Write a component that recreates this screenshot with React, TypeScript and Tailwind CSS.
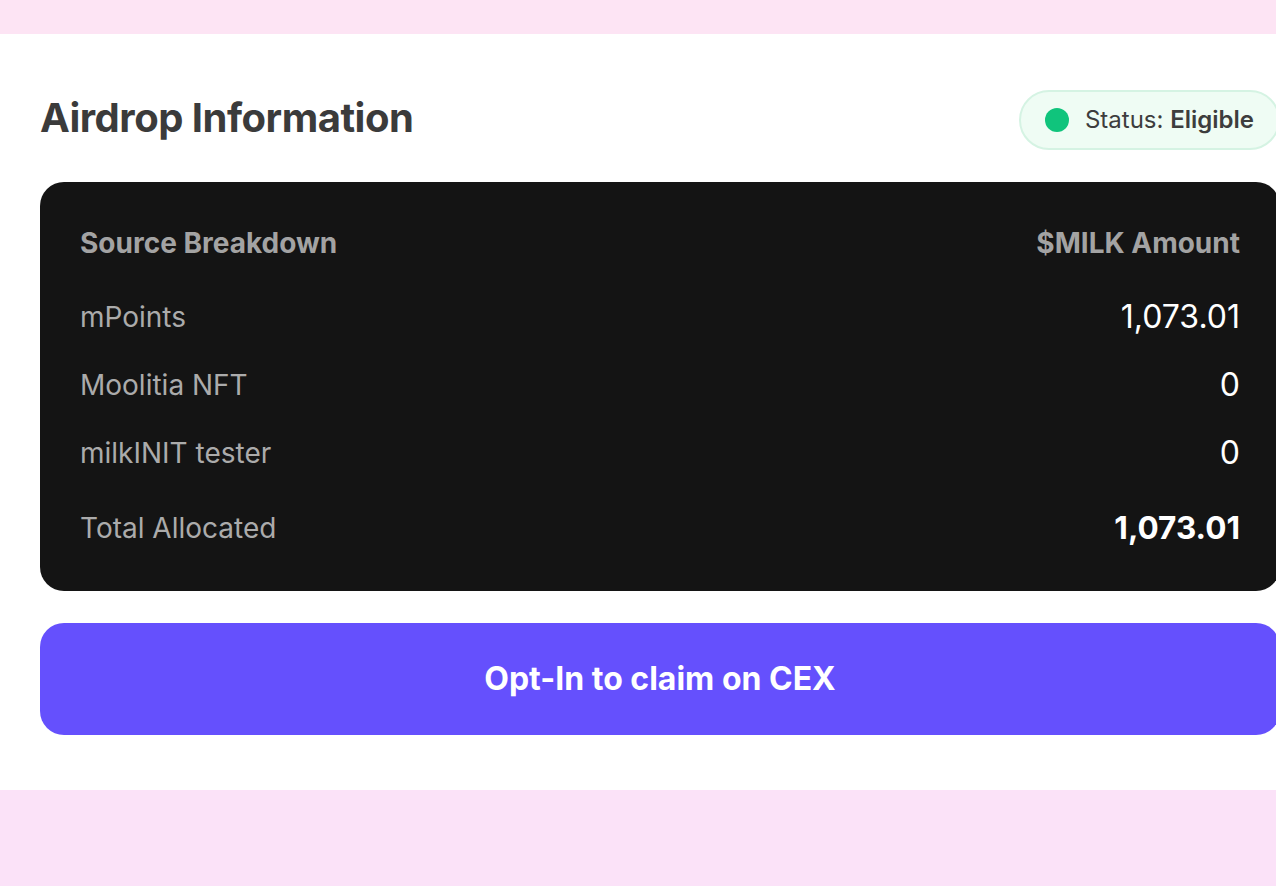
const rows = [
  { label: "mPoints", amount: "1,073.01" },
  { label: "Moolitia NFT", amount: "0" },
  { label: "milkINIT tester", amount: "0" },
];

export default function App() {
  return (
    <div
      className="min-h-[886px] w-full overflow-hidden bg-[#fbe2f8] text-[#3a3a3a]"
      style={{ fontFamily: "Inter, 'Noto Sans', sans-serif" }}
    >
      <div className="h-[34px] bg-[#fde4f4]" />
      <section className="bg-white px-10 pt-14 pb-[55px]">
        <div className="w-[1240px]">
          <div className="flex h-[60px] items-center justify-between">
            <h1 className="-mt-1 text-[40px] font-bold leading-none tracking-[-0.5px] text-[#3b3b3b]">
              Airdrop Information
            </h1>
            <div className="flex h-[60px] items-center gap-4 rounded-full border-2 border-[#d5f3e3] bg-[#effcf4] pl-[24px] pr-[24px]">
              <span className="h-6 w-6 rounded-full bg-[#10c47c]" />
              <span className="text-[24px] text-[#3d3d3d]">
                Status: <span className="font-semibold">Eligible</span>
              </span>
            </div>
          </div>

          <div className="mt-8 rounded-[24px] bg-[#141414] px-10 py-10">
            <div className="flex h-[42px] items-center justify-between text-[28px] font-bold text-[#a3a3a3]">
              <span>Source Breakdown</span>
              <span>$MILK Amount</span>
            </div>
            <div className="mt-[33px] flex flex-col gap-7">
              {rows.map((r) => (
                <div key={r.label} className="flex h-10 items-center justify-between">
                  <span className="text-[28px] text-[#ababab]">{r.label}</span>
                  <span className="text-[32px] text-white">{r.amount}</span>
                </div>
              ))}
            </div>
            <div className="mt-8 flex h-[46px] items-center justify-between">
              <span className="text-[28px] text-[#ababab]">Total Allocated</span>
              <span className="text-[31.5px] font-bold text-white">1,073.01</span>
            </div>
          </div>

          <button className="mt-8 flex h-[112px] w-full items-center justify-center rounded-[24px] bg-[#6550fd] text-[32px] font-bold text-white">
            Opt-In to claim on CEX
          </button>
        </div>
      </section>
    </div>
  );
}
